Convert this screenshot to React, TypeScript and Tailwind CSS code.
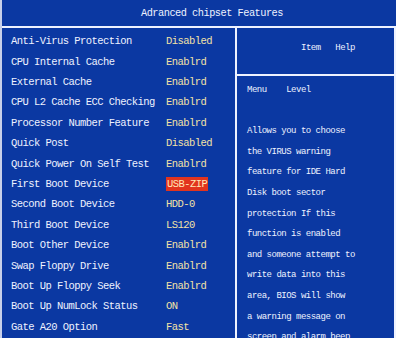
import React from 'react';

const ROWS: { label: string; value: string; hot?: boolean }[] = [
  { label: 'Anti-Virus Protection', value: 'Disabled' },
  { label: 'CPU Internal Cache', value: 'Enablrd' },
  { label: 'External Cache', value: 'Enablrd' },
  { label: 'CPU L2 Cache ECC Checking', value: 'Enablrd' },
  { label: 'Processor Number Feature', value: 'Enablrd' },
  { label: 'Quick Post', value: 'Disabled' },
  { label: 'Quick Power On Self Test', value: 'Enablrd' },
  { label: 'First Boot Device', value: 'USB-ZIP', hot: true },
  { label: 'Second Boot Device', value: 'HDD-0' },
  { label: 'Third Boot Device', value: 'LS120' },
  { label: 'Boot Other Device', value: 'Enablrd' },
  { label: 'Swap Floppy Drive', value: 'Enablrd' },
  { label: 'Boot Up Floppy Seek', value: 'Enablrd' },
  { label: 'Boot Up NumLock Status', value: 'ON' },
  { label: 'Gate A20 Option', value: 'Fast' },
];

const HELP = [
  'Allows you to choose',
  'the VIRUS warning',
  'feature for IDE Hard',
  'Disk boot sector',
  'protection If this',
  'function is enabled',
  'and someone attempt to',
  'write data into this',
  'area, BIOS will show',
  'a warning message on',
  'screen and alarm beep',
];

export default function App() {
  return (
    <div className="w-[396px] h-[338px] overflow-hidden bg-[#0b38a2] border-l-2 border-[#c8d0ea] flex flex-col font-['Liberation_Mono',monospace] text-[#eef2ff]">
      {/* Title bar */}
      <div className="h-[28px] shrink-0 border-b-2 border-[#eef2ff] flex items-center pl-[139px] pt-[1px] text-[10.3px] tracking-[-0.5px] whitespace-pre">
        Adranced chipset Features
      </div>

      <div className="flex flex-1 min-h-0">
        {/* Settings list */}
        <div className="w-[233px] shrink-0 pt-[4px] pl-[9px] text-[10.5px] tracking-[-0.55px]">
          {ROWS.map(r => (
            <div key={r.label} className="h-[20.4px] grid grid-cols-[155px_1fr] items-center whitespace-pre">
              <span>{r.label}</span>
              <span>
                {r.hot ? (
                  <span className="bg-[#e2341e] text-[#ffe6b8] px-[1px] py-[1px]">{r.value}</span>
                ) : (
                  <span className="text-[#f2e2a6]">{r.value}</span>
                )}
              </span>
            </div>
          ))}
        </div>

        {/* Item help */}
        <div className="flex-1 border-l-2 border-r-2 border-[#eef2ff] flex flex-col text-[9px] tracking-[-0.5px]">
          <div className="h-[48px] shrink-0 border-b-2 border-[#eef2ff] flex items-center pl-[64px] pb-[4px] whitespace-pre">
            Item   Help
          </div>
          <div className="pl-[10px] pt-[4px] leading-[20.6px] whitespace-pre">
            <div>Menu    Level</div>
            <div className="mt-[20.6px]">
              {HELP.map(line => (
                <div key={line}>{line}</div>
              ))}
            </div>
          </div>
        </div>
      </div>
    </div>
  );
}
